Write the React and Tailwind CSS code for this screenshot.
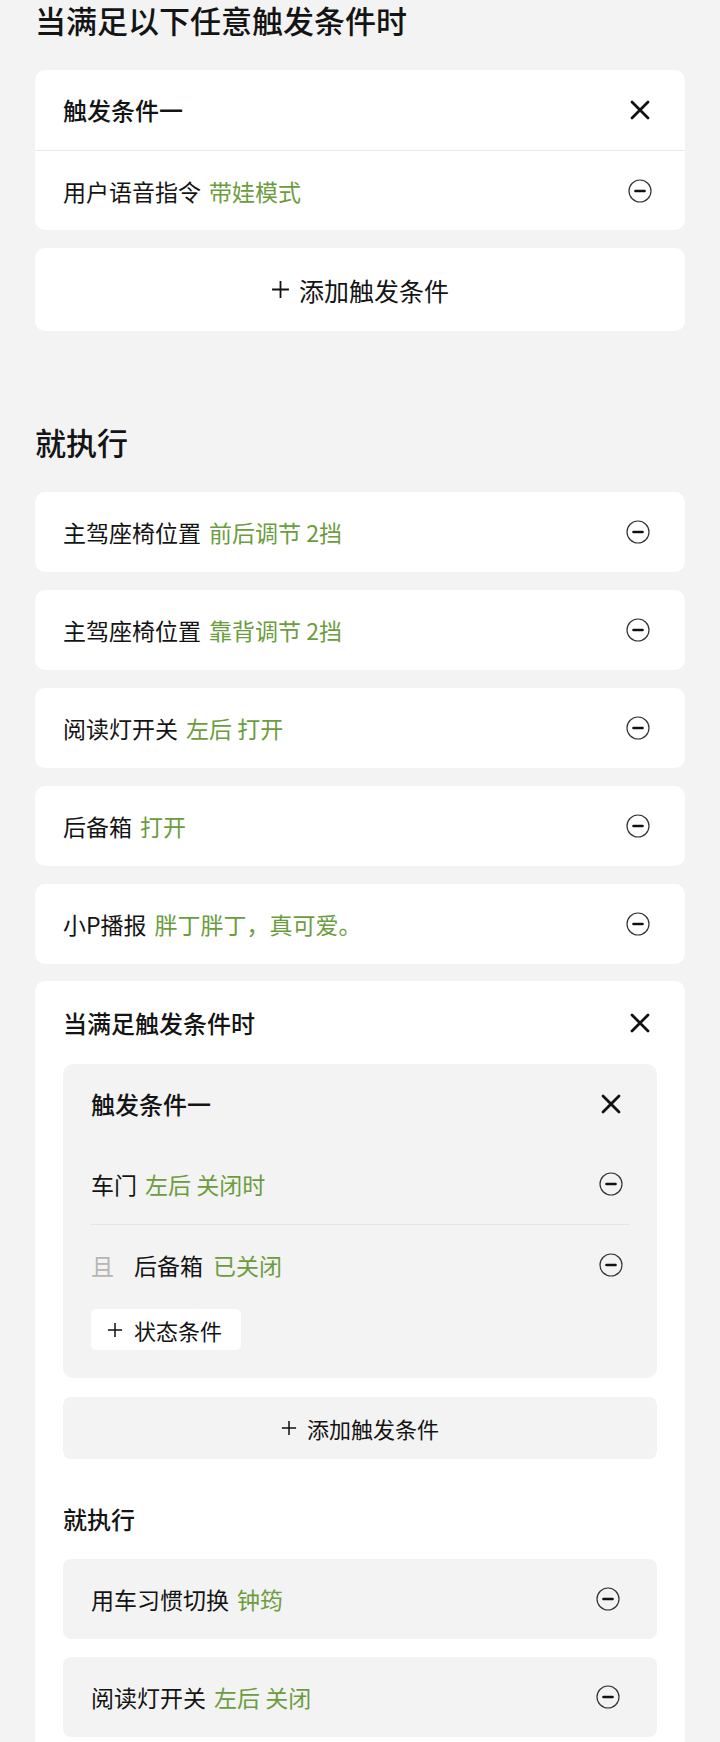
import React from "react";

const FONT = { fontFamily: '"Noto Sans CJK SC", "Noto Sans", sans-serif' };

function XIcon() {
  return (
    <svg width="22" height="22" viewBox="0 0 22 22" className="shrink-0">
      <path d="M3 3 L19 19 M19 3 L3 19" stroke="#111" strokeWidth="2.8" strokeLinecap="round" />
    </svg>
  );
}

function MinusIcon() {
  return (
    <svg width="24" height="24" viewBox="0 0 24 24" className="shrink-0">
      <circle cx="12" cy="12" r="11" fill="none" stroke="#333" strokeWidth="1.2" />
      <path d="M7.5 12 H16.5" stroke="#111" strokeWidth="2.6" strokeLinecap="round" />
    </svg>
  );
}

function PlusIcon({ size = 18 }) {
  return (
    <svg width={size} height={size} viewBox="0 0 18 18" className="shrink-0">
      <path d="M9 1 V17 M1 9 H17" stroke="#111" strokeWidth="1.7" />
    </svg>
  );
}

function Row({ label, value, className = "" }) {
  return (
    <div className={`flex items-center justify-between ${className}`}>
      <div className="flex items-center text-[23px] leading-[30px] text-[#141414]">
        <span>{label}</span>
        <span className="ml-[8px] text-[#6b9d3e]">{value}</span>
      </div>
      <MinusIcon />
    </div>
  );
}

export default function App() {
  const actions = [
    ["主驾座椅位置", "前后调节 2挡"],
    ["主驾座椅位置", "靠背调节 2挡"],
    ["阅读灯开关", "左后 打开"],
    ["后备箱", "打开"],
    ["小P播报", "胖丁胖丁，真可爱。"],
  ];
  return (
    <div style={FONT} className="min-h-[1742px] bg-[#f3f3f3] px-[35px] text-[#141414]">
      <h1 className="text-[31px] font-medium leading-[40px]">当满足以下任意触发条件时</h1>

      <div className="mt-[30px] rounded-[10px] bg-white">
        <div className="flex h-[80px] items-center justify-between pl-[28px] pr-[34px]">
          <span className="text-[24px] font-medium leading-[30px]">触发条件一</span>
          <XIcon />
        </div>
        <div className="h-px bg-[#ebebeb]" />
        <Row label="用户语音指令" value="带娃模式" className="h-[79px] pl-[28px] pr-[33px]" />
      </div>

      <div className="mt-[18px] flex h-[83px] items-center justify-center gap-[9px] rounded-[10px] bg-white">
        <PlusIcon size={19} />
        <span className="text-[25px] leading-[30px]">添加触发条件</span>
      </div>

      <h2 className="mt-[91px] text-[31px] font-medium leading-[40px]">就执行</h2>

      <div className="mt-[30px] flex flex-col gap-[18px]">
        {actions.map(([l, v], i) => (
          <div key={i} className="rounded-[10px] bg-white">
            <Row label={l} value={v} className="h-[80px] pl-[28px] pr-[35px]" />
          </div>
        ))}
      </div>

      <div className="mt-[17px] rounded-t-[10px] bg-white px-[28px] pb-[40px]">
        <div className="flex h-[83px] items-center justify-between pr-[6px]">
          <span className="text-[24px] font-medium leading-[30px]">当满足触发条件时</span>
          <XIcon />
        </div>

        <div className="rounded-[10px] bg-[#f3f3f3] pb-[28px]">
          <div className="flex h-[80px] items-center justify-between pl-[28px] pr-[35px]">
            <span className="text-[24px] font-medium leading-[30px]">触发条件一</span>
            <XIcon />
          </div>
          <Row label="车门" value="左后 关闭时" className="h-[80px] pl-[28px] pr-[34px]" />
          <div className="mx-[28px] h-px bg-[#e4e4e4]" />
          <div className="flex h-[80px] items-center justify-between pl-[28px] pr-[34px]">
            <div className="flex items-center text-[23px] leading-[30px]">
              <span className="text-[#b5b5b5]">且</span>
              <span className="ml-[20px]">后备箱</span>
              <span className="ml-[10px] text-[#6b9d3e]">已关闭</span>
            </div>
            <MinusIcon />
          </div>
          <div className="ml-[28px] mt-[4px] flex h-[41px] w-[150px] items-center gap-[11px] rounded-[5px] bg-white pl-[16px]">
            <PlusIcon size={16} />
            <span className="text-[22px] leading-[30px]">状态条件</span>
          </div>
        </div>

        <div className="mt-[19px] flex h-[62px] items-center justify-center gap-[10px] rounded-[8px] bg-[#f3f3f3]">
          <PlusIcon size={16} />
          <span className="text-[22px] leading-[30px]">添加触发条件</span>
        </div>

        <h3 className="mt-[40px] text-[24px] font-medium leading-[40px]">就执行</h3>

        <div className="mt-[20px] flex flex-col gap-[18px]">
          <div className="rounded-[8px] bg-[#f3f3f3]">
            <Row label="用车习惯切换" value="钟筠" className="h-[80px] pl-[28px] pr-[37px]" />
          </div>
          <div className="rounded-[8px] bg-[#f3f3f3]">
            <Row label="阅读灯开关" value="左后 关闭" className="h-[80px] pl-[28px] pr-[37px]" />
          </div>
        </div>
      </div>
    </div>
  );
}
